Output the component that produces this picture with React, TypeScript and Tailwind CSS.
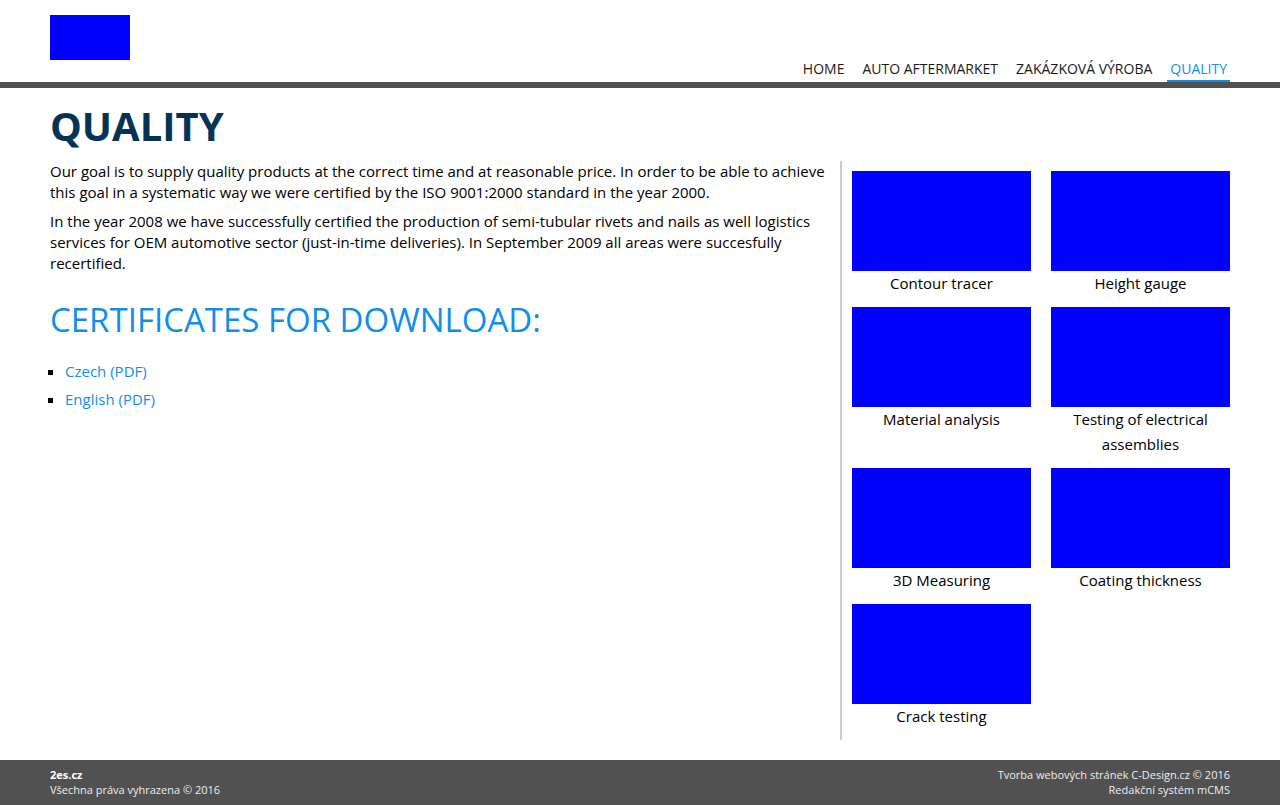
import React from "react";

const nav = [
  { label: "HOME", active: false },
  { label: "AUTO AFTERMARKET", active: false },
  { label: "ZAKÁZKOVÁ VÝROBA", active: false },
  { label: "QUALITY", active: true },
];

const gallery = [
  "Contour tracer",
  "Height gauge",
  "Material analysis",
  "Testing of electrical assemblies",
  "3D Measuring",
  "Coating thickness",
  "Crack testing",
];

export default function App() {
  return (
    <div className="flex min-h-screen flex-col bg-white font-['Open_Sans',sans-serif] text-[15px] text-black">
      <header className="border-b-6 border-[#515151]">
        <div className="mx-auto flex max-w-[1180px] items-end justify-between">
          <a href="#" aria-label="2es.cz" className="mt-[15px] mb-[22px] block h-[45px] w-20 bg-[#0000ff]" />
          <nav className="flex gap-3 text-sm">
            {nav.map((item) => (
              <a
                key={item.label}
                href="#"
                className={
                  item.active
                    ? "border-b-2 border-[#118eea] px-[3px] leading-[22px] text-[#118eea]"
                    : "border-b-2 border-transparent px-[3px] leading-[22px] text-[#1a1a1a]"
                }
              >
                {item.label}
              </a>
            ))}
          </nav>
        </div>
      </header>

      <main className="mx-auto w-full max-w-[1180px] grow pt-[11px] pb-5">
        <h1 className="text-[40px] leading-[54px] font-bold text-[#053354]">QUALITY</h1>
        <div className="mt-2 flex gap-[10px]">
          <section className="flex-1 leading-[21px]">
            <p className="mb-2">
              Our goal is to supply quality products at the correct time and at reasonable price. In order to be able to
              achieve this goal in a systematic way we were certified by the ISO 9001:2000 standard in the year 2000.
            </p>
            <p>
              In the year 2008 we have successfully certified the production of semi-tubular rivets and nails as well
              logistics services for OEM automotive sector (just-in-time deliveries). In September 2009 all areas were
              succesfully recertified.
            </p>
            <h2 className="mt-6 text-[33px] leading-[43px] text-[#118eea]">CERTIFICATES FOR DOWNLOAD:</h2>
            <ul className="mt-4 list-[square] pl-[15px] leading-7">
              <li><a href="#" className="text-[#118eea]">Czech (PDF)</a></li>
              <li><a href="#" className="text-[#118eea]">English (PDF)</a></li>
            </ul>
          </section>
          <aside className="grid w-[390px] grid-cols-2 gap-x-5 gap-y-[11px] border-l-2 border-[#cccccc] pt-[10px] pb-[11px] pl-[10px]">
            {gallery.map((caption) => (
              <figure key={caption} className="text-center">
                <div className="h-[100px] bg-[#0000ff]" />
                <figcaption className="leading-[25px]">{caption}</figcaption>
              </figure>
            ))}
          </aside>
        </div>
      </main>

      <footer className="bg-[#515151] text-[11px] leading-[15px] text-[#eeeeee]">
        <div className="mx-auto flex max-w-[1180px] justify-between pt-[7px] pb-[8px]">
          <div>
            <strong className="block font-bold text-white">2es.cz</strong>
            <p>Všechna práva vyhrazena © 2016</p>
          </div>
          <div className="text-right">
            <p>Tvorba webových stránek <a href="#">C-Design.cz</a> © 2016</p>
            <p>Redakční systém <a href="#">mCMS</a></p>
          </div>
        </div>
      </footer>
    </div>
  );
}
